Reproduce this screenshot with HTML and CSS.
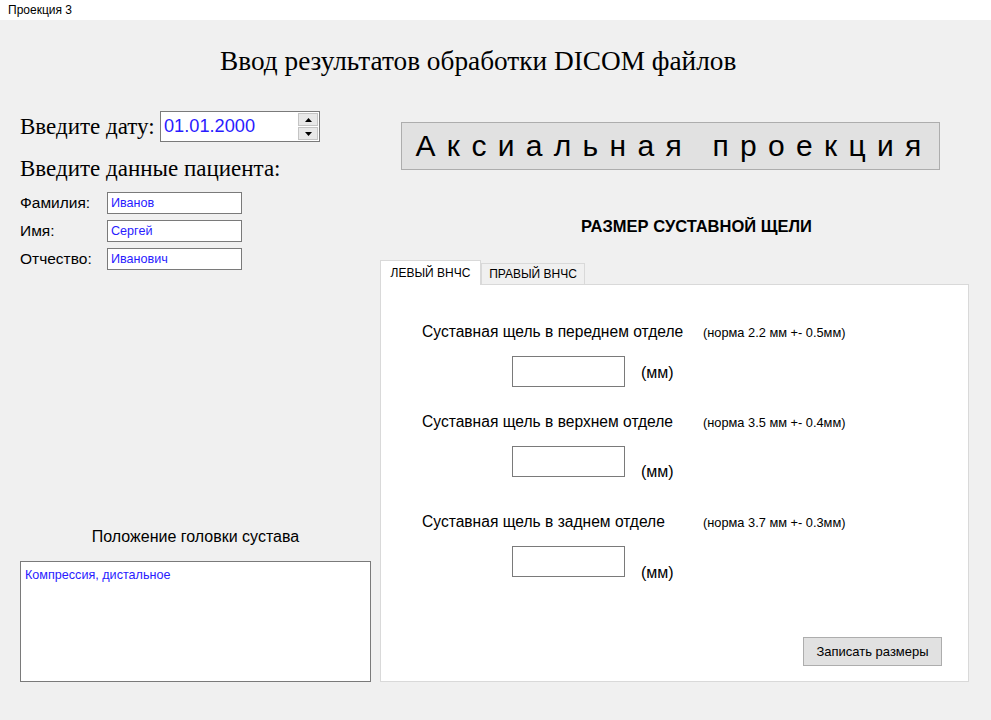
FILE: index.html
```html
<!DOCTYPE html>
<html lang="ru">
<head>
<meta charset="utf-8">
<title>Проекция 3</title>
<link rel="stylesheet" href="styles.css">
</head>
<body>
<div class="titlebar">Проекция 3</div>
<div class="window">
  <h1 class="heading">Ввод результатов обработки DICOM файлов</h1>
  <div class="content">
    <div class="left">
      <div class="date-row">
        <span class="serif-label date-label">Введите дату:</span>
        <div class="spinbox">
          <span class="spin-value">01.01.2000</span>
          <div class="spin-buttons">
            <div class="spin-btn"><svg width="7" height="4" viewBox="0 0 7 4"><path d="M3.5 0 L7 4 L0 4 Z" fill="#000"/></svg></div>
            <div class="spin-btn"><svg width="7" height="4" viewBox="0 0 7 4"><path d="M0 0 L7 0 L3.5 4 Z" fill="#000"/></svg></div>
          </div>
        </div>
      </div>
      <div class="serif-label patient-title">Введите данные пациента:</div>
      <div class="fields">
        <div class="field-row"><span class="field-label">Фамилия:</span><div class="field-input">Иванов</div></div>
        <div class="field-row"><span class="field-label">Имя:</span><div class="field-input">Сергей</div></div>
        <div class="field-row"><span class="field-label">Отчество:</span><div class="field-input">Иванович</div></div>
      </div>
      <div class="head-section">
        <div class="head-title">Положение головки сустава</div>
        <div class="textarea">Компрессия, дистальное</div>
      </div>
    </div>
    <div class="right">
      <div class="axial-btn">Аксиальная проекция</div>
      <div class="size-title">РАЗМЕР СУСТАВНОЙ ЩЕЛИ</div>
      <div class="tabs">
        <div class="tab active">ЛЕВЫЙ ВНЧС</div>
        <div class="tab">ПРАВЫЙ ВНЧС</div>
      </div>
      <div class="panel">
        <div class="measure m1">
          <div class="measure-head"><span class="measure-label">Суставная щель в переднем отделе</span><span class="norm">(норма 2.2 мм +- 0.5мм)</span></div>
          <div class="measure-input-row"><div class="num-input"></div><span class="unit">(мм)</span></div>
        </div>
        <div class="measure m2">
          <div class="measure-head"><span class="measure-label">Суставная щель в верхнем отделе</span><span class="norm">(норма 3.5 мм +- 0.4мм)</span></div>
          <div class="measure-input-row"><div class="num-input"></div><span class="unit">(мм)</span></div>
        </div>
        <div class="measure m3">
          <div class="measure-head"><span class="measure-label">Суставная щель в заднем отделе</span><span class="norm">(норма 3.7 мм +- 0.3мм)</span></div>
          <div class="measure-input-row"><div class="num-input"></div><span class="unit">(мм)</span></div>
        </div>
        <div class="panel-footer">
          <div class="save-btn">Записать размеры</div>
        </div>
      </div>
    </div>
  </div>
</div>
</body>
</html>
```

FILE: styles.css
```css
* { box-sizing: border-box; }
html, body { margin: 0; padding: 0; }
body {
  width: 991px;
  height: 720px;
  background: #f0f0f0;
  font-family: "Liberation Sans", "DejaVu Sans", sans-serif;
  color: #000;
  overflow: hidden;
}
.titlebar {
  height: 20px;
  background: #fff;
  font-family: "Liberation Sans", sans-serif;
  font-size: 12px;
  line-height: 20px;
  padding-left: 8px;
}
.window {
  padding: 0 22px 0 20px;
}
.heading {
  margin: 0;
  padding: 26px 0 0 200px;
  font-family: "Liberation Serif", serif;
  font-weight: normal;
  font-size: 27.3px;
  line-height: 30px;
  height: 64px;
}
.content {
  display: grid;
  grid-template-columns: 351px 589px;
  column-gap: 9px;
  margin-top: 27px;
  height: 571px;
}
.left {
  display: flex;
  flex-direction: column;
}
.serif-label {
  font-family: "Liberation Serif", serif;
  font-size: 23px;
}
.date-row {
  display: flex;
  align-items: center;
}
.date-label {
  width: 140px;
}
.spinbox {
  width: 160px;
  height: 31px;
  border: 1px solid #7a7a7a;
  background: #fff;
  display: flex;
  align-items: center;
  justify-content: space-between;
  padding: 1px 1px 1px 3px;
}
.spin-value {
  font-family: "Liberation Sans", sans-serif;
  font-size: 18.2px;
  color: #2a1bff;
}
.spin-buttons {
  display: flex;
  flex-direction: column;
  gap: 1px;
  height: 27px;
}
.spin-btn {
  width: 20px;
  flex: 1;
  background: #e8e8e8;
  border: 1px solid #c4c4c4;
  display: flex;
  align-items: center;
  justify-content: center;
}
.patient-title {
  margin-top: 14px;
  line-height: 26px;
}
.fields {
  display: flex;
  flex-direction: column;
  gap: 6px;
  margin-top: 10px;
}
.field-row {
  display: flex;
  align-items: center;
}
.field-label {
  width: 87px;
  font-size: 15.5px;
}
.field-input {
  width: 135px;
  height: 22px;
  border: 1px solid #7a7a7a;
  background: #fff;
  font-size: 12.6px;
  line-height: 20px;
  padding-left: 3px;
  color: #2a1bff;
}
.head-section {
  margin-top: auto;
}
.head-title {
  text-align: center;
  font-size: 16px;
  line-height: 20px;
  margin-bottom: 14px;
}
.textarea {
  width: 351px;
  height: 121px;
  border: 1px solid #7a7a7a;
  background: #fff;
  font-size: 12.6px;
  padding: 6px 4px;
  color: #2a1bff;
}
.right {
  display: flex;
  flex-direction: column;
}
.axial-btn {
  margin: 11px 0 0 21px;
  width: 539px;
  height: 48px;
  background: #e1e1e1;
  border: 1px solid #adadad;
  font-family: "Liberation Sans", sans-serif;
  font-size: 30px;
  letter-spacing: 11.3px;
  display: flex;
  align-items: center;
  justify-content: center;
  padding-left: 7px;
}
.size-title {
  margin-top: 46px;
  text-align: center;
  padding-left: 44px;
  font-weight: bold;
  font-size: 16.5px;
  line-height: 20px;
}
.tabs {
  display: flex;
  align-items: flex-end;
  margin-top: 24px;
  height: 24px;
}
.tab {
  font-size: 12px;
  border: 1px solid #d9d9d9;
  border-bottom: none;
  background: #f0f0f0;
  height: 21px;
  line-height: 20px;
  width: 104px;
  text-align: center;
}
.tab.active {
  background: #fff;
  width: 101px;
  line-height: 24px;
  position: relative;
  z-index: 1;
  margin-bottom: -1px;
  height: 25px;
}
.panel {
  flex: 1;
  background: #fff;
  border: 1px solid #d9d9d9;
  display: flex;
  flex-direction: column;
  padding: 37px 0 15px 41px;
}
.measure {
  display: flex;
  flex-direction: column;
}
.m1 { height: 90px; }
.m2 { height: 100px; }
.m3 { height: 100px; }
.measure-head {
  display: flex;
  align-items: center;
  height: 20px;
}
.measure-label {
  font-size: 15.6px;
  width: 281px;
  white-space: nowrap;
}
.norm {
  font-size: 12.8px;
  white-space: nowrap;
}
.measure-input-row {
  display: flex;
  align-items: flex-start;
  margin-top: 14px;
  padding-left: 90px;
}
.num-input {
  width: 113px;
  height: 31px;
  border: 1px solid #7a7a7a;
  background: #fff;
}
.unit {
  font-size: 16px;
  line-height: 20px;
  margin-left: 16px;
}
.m1 .unit { margin-top: 7px; }
.m2 .unit { margin-top: 16px; }
.m3 .unit { margin-top: 17px; }
.panel-footer {
  margin-top: auto;
  display: flex;
  justify-content: flex-end;
  padding-right: 26px;
}
.save-btn {
  width: 139px;
  height: 29px;
  background: #e1e1e1;
  border: 1px solid #adadad;
  font-size: 13px;
  display: flex;
  align-items: center;
  justify-content: center;
}
```
